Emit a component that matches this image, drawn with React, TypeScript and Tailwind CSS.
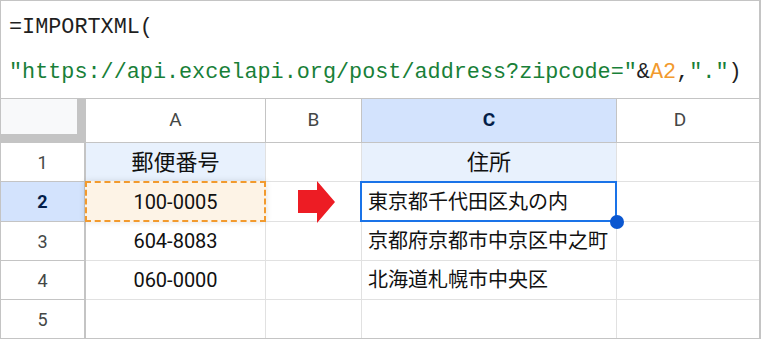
const cjk = "font-['Roboto','Noto_Sans_CJK_JP',sans-serif]";

function RowHead({ n, active }: { n: number; active?: boolean }) {
  return (
    <div
      className={`flex items-center justify-center border-r-2 border-b border-[#c4c4c4] text-[18px] ${
        active ? "bg-[#d3e3fd] font-bold text-[#041e49]" : "bg-white text-[#444746]"
      }`}
    >
      {n}
    </div>
  );
}

function ColHead({ label, active, last }: { label: string; active?: boolean; last?: boolean }) {
  return (
    <div
      className={`flex items-center justify-center border-b border-[#c4c4c4] text-[19px] ${last ? "pr-[16px]" : "border-r"} ${
        active ? "bg-[#d3e3fd] font-bold text-[#041e49]" : "bg-white text-[#444746]"
      }`}
    >
      {label}
    </div>
  );
}

function Cell({
  children,
  className = "",
  last,
}: {
  children?: React.ReactNode;
  className?: string;
  last?: boolean;
}) {
  return (
    <div className={`relative flex items-center border-b border-[#e1e1e1] text-[20px] text-[#111] ${last ? "" : "border-r"} ${className}`}>
      {children}
    </div>
  );
}

export default function App() {
  return (
    <div className={`w-[761px] h-[339px] overflow-hidden bg-white border-t border-l border-b border-r-2 border-[#c4c4c4] ${cjk}`}>
      <div className="h-[98px] border-b border-[#c4c4c4] pl-[8px] pt-[4px] font-['Liberation_Mono',monospace] text-[21.8px] leading-[45px] text-[#1f1f1f] whitespace-nowrap">
        <div>=IMPORTXML(</div>
        <div>
          <span className="text-[#188038]">"https://api.excelapi.org/post/address?zipcode="</span>
          <span>&amp;</span>
          <span className="text-[#f29a2e]">A2</span>
          <span>,</span>
          <span className="text-[#188038]">"."</span>
          <span>)</span>
        </div>
      </div>

      <div className="grid grid-cols-[85px_180px_96px_255px_1fr] grid-rows-[44px_39px_40px_39px_39px_38px]">
        {/* header row */}
        <div className="bg-[#c4c4c4]">
          <div className="w-[76px] h-[35px] bg-[#f8f9fa]" />
        </div>
        <ColHead label="A" />
        <ColHead label="B" />
        <ColHead label="C" active />
        <ColHead label="D" last />

        {/* row 1 */}
        <RowHead n={1} />
        <Cell className="justify-center bg-[#e8f1fd] text-[22px]">郵便番号</Cell>
        <Cell />
        <Cell className="justify-center bg-[#e8f1fd] text-[22px]">住所</Cell>
        <Cell last />

        {/* row 2 */}
        <RowHead n={2} active />
        <Cell className="justify-center">
          <div className="absolute -top-[1px] -left-[1px] -right-[1px] -bottom-[1px] border-2 border-dashed border-[#f29a2e] bg-[#fdf3e6] shadow-[0_0_6px_rgba(0,0,0,0.12)]" />
          <span className="relative">100-0005</span>
        </Cell>
        <Cell>
          <svg className="absolute left-[32px] top-[-1px]" width="38" height="43" viewBox="0 0 38 43">
            <polygon points="0,9 19,9 19,0 37,21 19,42 19,32 0,32" fill="#ed1c24" />
          </svg>
        </Cell>
        <Cell className="pl-[6px] z-10">
          <div className="absolute -top-[1px] -left-[2px] -right-[1px] -bottom-[1px] border-2 border-[#1a73e8]" />
          <div className="absolute -right-[8px] -bottom-[8px] w-[14px] h-[14px] rounded-full bg-[#0b57d0]" />
          <span className="relative">東京都千代田区丸の内</span>
        </Cell>
        <Cell last />

        {/* row 3 */}
        <RowHead n={3} />
        <Cell className="justify-center">604-8083</Cell>
        <Cell />
        <Cell className="pl-[6px]">京都府京都市中京区中之町</Cell>
        <Cell last />

        {/* row 4 */}
        <RowHead n={4} />
        <Cell className="justify-center">060-0000</Cell>
        <Cell />
        <Cell className="pl-[6px]">北海道札幌市中央区</Cell>
        <Cell last />

        {/* row 5 */}
        <div className="flex items-center justify-center border-r-2 border-[#c4c4c4] text-[18px] text-[#444746]">5</div>
        <div className="border-r border-[#e1e1e1]" />
        <div className="border-r border-[#e1e1e1]" />
        <div className="border-r border-[#e1e1e1]" />
        <div />
      </div>
    </div>
  );
}
